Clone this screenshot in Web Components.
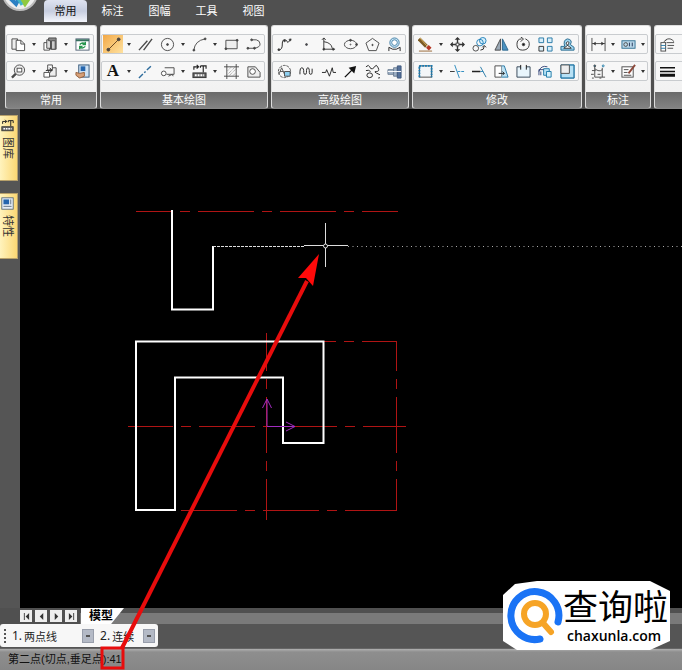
<!DOCTYPE html>
<html lang="zh-CN">
<head>
<meta charset="utf-8">
<title>CAD</title>
<style>
html, body { margin: 0; height: 100%; background: #000; }
body { font-family: "Liberation Sans", "Noto Sans CJK SC", sans-serif; font-size: 11px; overflow: hidden; }
</style>
</head>
<body>
<cad-app></cad-app>
<script>
const ICONS = {
  copy: '<path d="M1 2h6v11H1z" fill="#eee"/><path d="M5.500 3.500h5l4 4v7h-9z" fill="#fff"/><path d="M10.500 3.500v4h4"/>',
  paste: '<path d="M1 6h6v8H1z" fill="#fff"/><path d="M4 3h5v9H4z" fill="#ddd"/><path d="M6 1h8v12H8V4H6z" fill="#888"/><path d="M9 4h4v9H9z" fill="#ccc"/>',
  refresh: '<rect x="1" y="2" width="14" height="12" fill="#fff" stroke="#567"/><path d="M1 3.500h14" stroke="#387060" stroke-width="2"/><path d="M5 8q3-3 6-.5M11 5v3H8M11 10q-3 3-6 .5M5 13v-3h3" stroke="#27964d" stroke-width="1.500"/>',
  zoom: '<circle cx="9" cy="6.500" r="5.500" fill="#eee"/><rect x="6.500" y="4.500" width="5" height="4" fill="#fff"/><path d="M5 10.500l-4 4" stroke-width="2.500"/>',
  views: '<path d="M6 4h8v9H6z" fill="#eee"/><path d="M5 1h5v6H5z" fill="#fff"/><path d="M1 9h6v5H1z" fill="#fff"/><path d="M3 7l6-1-2-2M9 6l-1 3" stroke="#222"/>',
  props: '<rect x="4" y="1" width="11" height="13" fill="#cfe3f5" stroke="#357"/><rect x="6" y="2.500" width="5" height="5" fill="#2465ad" stroke="none"/><path d="M1 9l4 1 5-1v4l-5 2-4-3z" fill="#d7a078" stroke="#96603b"/>',
  panel: '<rect x="1" y="1" width="14" height="14" fill="#e6eef6" stroke="#4a5d70"/><rect x="3" y="3" width="7" height="6" fill="#2465ad" stroke="none"/><path d="M12 3v6M3 11.500h10" stroke="#4a5d70"/>',
  line: '<path d="M2 14L14 2" stroke="#654321"/><circle cx="2.500" cy="13.500" r="1.500" fill="#543"/><circle cx="13.500" cy="2.500" r="1.500" fill="#543"/>',
  parallel: '<path d="M1 14L10 4M6 14L15 2" stroke-width="1.500"/>',
  circle: '<circle cx="8" cy="8" r="6.500"/><circle cx="8" cy="8" r="1" fill="#444"/>',
  arc: '<path d="M2 14Q3 4 14 2"/><circle cx="2" cy="14" r="1" fill="#444"/><circle cx="14" cy="2" r="1" fill="#444"/>',
  rect: '<path d="M2 3.500h12v9H2z" fill="#eee"/><circle cx="14" cy="3.500" r="1" fill="#444"/><circle cx="2" cy="12.500" r="1" fill="#444"/>',
  poly: '<path d="M6 3h5q4 1 4 4.500T9 12H2"/><circle cx="2" cy="12" r="1" fill="#444"/><circle cx="9" cy="12" r="1" fill="#444"/><circle cx="6" cy="3" r="1" fill="#444"/>',
  centerline: '<path d="M1 15L15 1" stroke="#2e6c9c" stroke-width="1.500" stroke-dasharray="6 2 2 2"/>',
  balloon: '<path d="M5 4h10v7H7M9 13l4-2 1 2"/><circle cx="4" cy="10" r="2.500" fill="#fff"/>',
  library: '<path d="M2 6V3h5M5 1l2 2-2 2M9 2h6v3M12 2v7M9 2v2" stroke="#222" stroke-width="1.200"/><rect x="1" y="9.500" width="14" height="5" fill="#666" stroke="#333"/><path d="M3 12h10" stroke="#fff" stroke-width="2" stroke-dasharray="2 1"/>',
  hatch: '<path d="M3 0v16M13 0v16M0 3h16M0 13h16"/><path d="M4 7l4-4M4 11l8-8M5 13l8-8M9 13l4-4" stroke="#888" stroke-dasharray="1 1"/>',
  region: '<path d="M2 3h8l5 6v5H2z" fill="#eee"/><circle cx="7" cy="8" r="3" fill="#fff"/>',
  spline: '<path d="M1 14C9 14 3 3 8 3S9 10 15 2" stroke="#222"/><circle cx="2" cy="13.500" r="1" fill="#222"/><circle cx="8" cy="4" r="1" fill="#222"/><circle cx="14" cy="3" r="1" fill="#222"/>',
  point: '<circle cx="8" cy="8" r="1" fill="#445"/>',
  axes: '<path d="M3 1v12h12M3 5q8 1 9 7M1 3l2-2 2 2" stroke="#333"/><circle cx="3" cy="13" r="1" fill="#222"/><circle cx="13" cy="13" r="1" fill="#222"/>',
  ellipse: '<ellipse cx="8" cy="8" rx="6.500" ry="4.500"/><circle cx="8" cy="3.500" r="1" fill="#444"/><circle cx="14.500" cy="8" r="1" fill="#444"/><circle cx="8" cy="8" r=".5"/>',
  pentagon: '<path d="M8 1.500l7 5-3 8H4l-3-8z"/><circle cx="8" cy="8.500" r=".7" fill="#444"/>',
  hole: '<circle cx="8" cy="6" r="5" fill="#c9e6f7" stroke="#4682a8"/><circle cx="8" cy="6" r="3" fill="#fff" stroke="#4682a8"/><path d="M2 15v-4l4 2h4l4-2v4" stroke="#222"/>',
  rotview: '<circle cx="8" cy="8" r="6.500" stroke-dasharray="3 1"/><path d="M8 8h6v5H8z" fill="#8fd0f0"/><path d="M2 11l3-7 3 7M3 8h4" stroke="#555"/>',
  wave: '<path d="M1 11V8q0-4 2-4t2 3v2q0 2 1.500 2T8 9V7q0-3 1.500-3T11 7v2q0 2 1.500 2T14 9V5" stroke="#222"/>',
  break: '<path d="M1 9h4l1-3 3 7 3-9 1 5h3" stroke="#222"/>',
  arrow: '<path d="M2 14L10 6" stroke="#111" stroke-width="1.500"/><path d="M14 2l-2 8-6-6z" fill="#111" stroke="none"/>',
  curves: '<path d="M1 3q3-3 4 0t3 2 3-3 3 2-2 4 3 3-1 4M1 7q3-1 5 1" stroke="#222"/><ellipse cx="5" cy="12" rx="3" ry="2.500" stroke="#222"/>',
  shaft: '<path d="M1 6h6v5H1zM7 4h4v9H7z" fill="#9fb1c5" stroke="#6d7f94"/><path d="M11 2h4v13h-4z" fill="#547099" stroke="#3f587c"/><path d="M1 8h14" stroke="#fff"/>',
  erase: '<path d="M1 2l8 8" stroke="#7c5b24" stroke-width="4"/><path d="M2 1l8 9" stroke="#e2ba67"/><path d="M10 10l3 3" stroke="#b63824" stroke-width="4"/><path d="M1 15h14" stroke="#996633"/>',
  move: '<path d="M8 1v14M1 8h14" stroke="#333" stroke-width="1.500"/><path d="M8 0l3 3H5zM8 16l3-3H5zM0 8l3-3v6zM16 8l-3-3v6z" fill="#333" stroke="none"/><rect x="6.500" y="6.500" width="3" height="3" fill="#fff"/>',
  copyobj: '<circle cx="11.500" cy="4" r="3.500" stroke="#2382bb" fill="#d6effb"/><circle cx="8.500" cy="6" r="3.500" stroke="#2382bb"/><circle cx="4" cy="12" r="3"/><path d="M9 14q4 0 4-4M11 11l2-2 2 2" stroke="#222"/>',
  mirror: '<path d="M7 2v12H1z" fill="#9aa8b5"/><path d="M9 2v12h6z" fill="#4c92c1" stroke="#2b668d"/>',
  rotate: '<path d="M10 2q5 2 4 7t-7 5-6-6 5-6M5 0l3 2-3 3" stroke="#333"/><circle cx="8" cy="8" r="1.300" fill="#111"/>',
  array: '<g fill="#d9effa" stroke="#287aa8"><path d="M1 1h5v5H1zM10 1h5v5h-5zM10 10h5v5h-5z"/><path d="M1 10h5v5H1z" stroke="#333"/></g>',
  offset: '<path d="M1 14v-4h4q-2-7 3-8 6 1 3 6l4 3v3z" fill="#9cd3ee" stroke="#24698d"/><path d="M4 12h8q-2-2-4-3 3-4 0-4-3 1 0 4z" fill="#fff" stroke="#333"/>',
  stretch: '<rect x="1.500" y="2" width="13" height="12" fill="#f3f6f8"/><path d="M1.500 14V2h13v12" stroke="#167cb5" stroke-width="2" stroke-dasharray="2 1"/>',
  trim: '<path d="M5 1l5 14" stroke="#2889be"/><path d="M0 8h5" stroke="#333"/><path d="M8 8h8" stroke="#2889be" stroke-dasharray="3 1"/>',
  extend: '<path d="M0 8h9" stroke="#222" stroke-width="1.500"/><path d="M9 8h3" stroke="#2889be"/><path d="M9 3l6 11" stroke="#287aa8"/>',
  scale: '<path d="M1 2h7v12H1z" fill="#fff"/><path d="M8 2h3l4 12H8" fill="#bfe2f3" stroke="#287aa8"/><path d="M5 10h6M9 8l2 2-2 2" stroke="#222"/>',
  gap: '<path d="M5 3H1v11h14V3h-4" fill="#e8f5fc" stroke="#345"/><path d="M5 1v5M11 1v5" stroke="#111"/>',
  block: '<path d="M6 5h6v7H6z" fill="#bce5f6" stroke="#1d78a7"/><path d="M9 8h5v6H9z" fill="#d8f3fc" stroke="#1d78a7"/><path d="M1 8q2-7 9-5M1 12V6h5M3 12V8" stroke="#347"/>',
  corner: '<path d="M1 1h14v14H1z" fill="#b7e1f5" stroke="#287aa8"/><path d="M1 1h9v9H1z" fill="#eee"/><path d="M10 1h5v14H1v-4" stroke="#287aa8"/>',
  dim: '<path d="M1 1v14M15 1v14M1 7h14"/><path d="M2 7l3-2v4zM14 7l-3-2v4z" fill="#333" stroke="none"/>',
  tol: '<rect x="1" y="4" width="14" height="8" fill="#b9d7e9" stroke="#347294"/><circle cx="5" cy="8" r="2"/><path d="M9 6v4M12 6v4" stroke="#235"/>',
  coords: '<path d="M4 2v12h11M4 5q5 4 8 1M1 7h4M12 4v10"/><circle cx="4" cy="2" r="1" fill="#1e7ba8"/><circle cx="13" cy="2" r="1" stroke="#1e7ba8"/><path d="M0 11h3M7 11h3M1 15h2M9 15h2"/>',
  editdim: '<rect x="1" y="3" width="12" height="11" fill="#fff"/><path d="M3 6h5M3 9h4M3 12h8"/><path d="M8 10L15 1" stroke="#8c493b" stroke-width="2"/>',
  layer: '<path d="M6 3q5-3 9 2M7 6h8M8 9h7M8 12h6M4 5l3-2"/><rect x="1" y="6" width="5" height="9" fill="#fff"/><path d="M1 9h5M1 12h5" stroke="#287aa8"/>',
  width: '<path d="M0 4h16M0 8h16" stroke="#111" stroke-width="1.500"/><path d="M0 12h16" stroke="#111" stroke-width="3"/>'
};
const svg = n => `<svg viewBox="0 0 16 16" fill="none" stroke="#4b4b4b" aria-hidden="true">${ICONS[n]}</svg>`;
function define(name, html) {
  customElements.define(name, class extends HTMLElement {
    connectedCallback() {
      if (this.shadowRoot) return;
      this.attachShadow({ mode: 'open' }).innerHTML = typeof html === 'function' ? html(this) : html;
    }
  });
}

define('tool-row', el => `<style>
  :host { display: flex; height: 18px; border: 1px solid #c9cccf; border-radius: 2px; background: #f7f7f7; margin: 0 -1px; }
  button { all: unset; display: flex; align-items: center; justify-content: center; width: 22px; }
  button.on { background: linear-gradient(135deg, #f2a846, #ffe2a0); width: 20px; margin: 0 1px; }
  button.drop { width: var(--drop, 10px); }
  .drop::before { content: ""; border: 2px solid transparent; border-top: 3px solid #333; border-bottom: 0; }
  svg { width: 15px; height: 15px; }
  b { font: bold 17px/18px "Liberation Serif", serif; color: #111; }
</style>${el.getAttribute('tools').split(' ').map(t =>
  t === 'v' ? '<button class="drop" aria-label="menu"></button>' :
  t === 'text' ? '<button aria-label="text"><b>A</b></button>' :
  `<button aria-label="${t}" class="${t === 'line' ? 'on' : ''}">${svg(t)}</button>`).join('')}`);

define('ribbon-group', `<style>
  :host { display: flex; flex-direction: column; flex: none; box-sizing: border-box; height: 84px; border: 1px solid #ddd; border-bottom-color: #888; border-radius: 3px; background: linear-gradient(#fbfbfb, #efefef); overflow: hidden; }
  .body { flex: 1; display: flex; flex-direction: column; gap: 7px; padding: 8px 3px 0 1px; }
  h2 { margin: 0; font-size: 11px; font-weight: 400; line-height: 16px; min-height: 16px; text-align: center; color: #fff; background: linear-gradient(#6a6a6a, #838383); }
</style><div class="body"><slot></slot></div><h2><slot name="title"></slot></h2>`);

define('ribbon-tab', `<style>
  :host { display: block; }
  button { all: unset; box-sizing: border-box; width: 43px; height: 22px; line-height: 22px; text-align: center; color: #fff; border-radius: 4px 4px 0 0; }
  :host([active]) button { background: linear-gradient(#dfe3f0, #c6cddf 50%, #f3f5fb); color: #111; }
</style><button role="tab"><slot></slot></button>`);

define('ribbon-bar', `<style>
  :host { display: block; background: #505050; height: 109px; overflow: hidden; }
  nav { display: flex; gap: 4px; padding-left: 44px; height: 25px; position: relative; }
  .logo { position: absolute; left: 2px; top: -25px; width: 36px; height: 36px; }
  .groups { display: flex; gap: 3px; padding-left: 5px; }
  .narrow { --drop: 8px; }
</style>
<nav role="tablist">
  <svg class="logo" viewBox="0 0 36 36"><circle cx="18" cy="18" r="17" fill="#eee" stroke="#bbb" stroke-width="2"/><path d="M7 22l7 7 5-9" fill="none" stroke="#2b80c3" stroke-width="4"/><path d="M17 20l6 9 6-9" fill="none" stroke="#8fc93f" stroke-width="4"/><path d="M15 22l5 8" stroke="#43b6c5" stroke-width="3"/></svg>
  <ribbon-tab active>常用</ribbon-tab><ribbon-tab>标注</ribbon-tab><ribbon-tab>图幅</ribbon-tab><ribbon-tab>工具</ribbon-tab><ribbon-tab>视图</ribbon-tab>
</nav>
<div class="groups">
  <ribbon-group><tool-row tools="copy v paste v refresh"></tool-row><tool-row tools="zoom v views v props"></tool-row><span slot="title">常用</span></ribbon-group>
  <ribbon-group><tool-row tools="line v parallel circle v arc v rect poly"></tool-row><tool-row tools="text v centerline balloon v library v hatch region"></tool-row><span slot="title">基本绘图</span></ribbon-group>
  <ribbon-group><tool-row tools="spline point axes ellipse pentagon hole"></tool-row><tool-row tools="rotview wave break arrow curves shaft"></tool-row><span slot="title">高级绘图</span></ribbon-group>
  <ribbon-group><tool-row tools="erase v move copyobj mirror rotate array offset"></tool-row><tool-row tools="stretch v trim extend scale gap block corner"></tool-row><span slot="title">修改</span></ribbon-group>
  <ribbon-group class="narrow"><tool-row tools="dim v tol v"></tool-row><tool-row tools="coords v editdim v"></tool-row><span slot="title">标注</span></ribbon-group>
  <ribbon-group><tool-row tools="layer rect"></tool-row><tool-row tools="width centerline"></tool-row></ribbon-group>
</div>`);

define('side-tab', el => `<style>
  :host { display: block; }
  button { all: unset; box-sizing: border-box; display: flex; flex-direction: column; align-items: center; gap: 5px; width: 18px; height: 66px; padding: 3px 2px 0 0; border: 1px solid #b7a06a; border-left: 0; background: linear-gradient(90deg, #fff3bd, #fbd774); color: #333; }
  svg { width: 13px; height: 13px; flex: none; }
  span { writing-mode: vertical-rl; text-orientation: sideways; line-height: 14px; }
</style><button>${svg(el.getAttribute('icon'))}<span><slot></slot></span></button>`);

define('cad-drawing', `<style>
  :host { display: block; flex: 1; min-width: 0; background: #000; overflow: hidden; }
  svg { display: block; width: 100%; height: 100%; }
</style>
<svg fill="none"><g transform="translate(-20 -109)">
  <g stroke="#b01414" stroke-dasharray="56 8 10 8">
    <path d="M136 211.500H398" stroke-dashoffset="20"/>
    <path d="M128 426.500H406" stroke-dashoffset="11"/>
    <path d="M324 341.500H397" stroke-dashoffset="44"/>
    <path d="M396.500 341V511" stroke-dashoffset="26"/>
    <path d="M180 510.500H397" stroke-dashoffset="-1"/>
    <path d="M266.500 333V520" stroke-dashoffset="18"/>
  </g>
  <g stroke="#fff" stroke-width="2">
    <path d="M172 210V309.500H213V246"/>
    <path d="M136 341.500H323.500V443H283V377.500H175V510H136Z"/>
  </g>
  <path d="M213 246.500H304" stroke="#ddd" stroke-dasharray="3 1"/>
  <path d="M348 246.500H4000" stroke="#aaa" stroke-dasharray="1 3.500"/>
  <path d="M304 245.500H348M325.500 223V267" stroke="#ddd"/><circle cx="325.500" cy="246" r="2" stroke="#ddd" fill="#000"/>
  <path d="M267 426.500V399M262.500 408l4.500-9 4.500 9M267 426.500H295M286 422l9 4.500-9 4.500" stroke="#a22cc0"/>
</g></svg>`);

define('model-tabs', `<style>
  :host { display: block; background: linear-gradient(#505050 5px, #7a7a7a 5px); }
  div { display: flex; align-items: center; height: 16px; padding-left: 20px; gap: 3px; background: linear-gradient(90deg, #505050 80px, transparent 80px); }
  button { all: unset; width: 12px; height: 12px; background: #eee; display: flex; justify-content: center; align-items: center; }
  button svg { width: 7px; height: 7px; fill: #333; }
  button.tab { width: 35px; height: 16px; padding-left: 8px; background: #fff; clip-path: polygon(0 0, 100% 0, 70% 100%, 0 100%); font-size: 12px; font-weight: 700; line-height: 16px; justify-content: flex-start; color: #000; margin-left: 1px; }
</style><div>
<button aria-label="first"><svg viewBox="0 0 8 8"><path d="M1 0h1v8H1zM7 0v8L3 4z"/></svg></button>
<button aria-label="previous"><svg viewBox="0 0 8 8"><path d="M6 0v8L2 4z"/></svg></button>
<button aria-label="next"><svg viewBox="0 0 8 8"><path d="M2 0v8l4-4z"/></svg></button>
<button aria-label="last"><svg viewBox="0 0 8 8"><path d="M6 0h1v8H6zM1 0v8l4-4z"/></svg></button>
<button class="tab">模型</button></div>`);

define('option-bar', `<style>
  :host { display: block; background: #555; }
  form { display: inline-flex; align-items: center; height: 23px; box-sizing: border-box; width: 158px; margin-bottom: 1px; vertical-align: top; background: #f7f7f7; border-radius: 3px; padding-left: 4px; }
  i { height: 14px; border-left: 2px dotted #555; margin-right: 6px; }
  label { display: flex; align-items: center; color: #222; font: 12px "Noto Sans", sans-serif; }
  .pick { display: flex; align-items: center; margin-left: 2px; }
  select { appearance: none; border: 0; background: transparent; font: 11px/16px "Noto Sans CJK SC", sans-serif; color: #222; height: 18px; width: 70px; padding: 0; }
  .pick::after { content: ""; pointer-events: none; width: 12px; height: 14px; margin-left: -12px; background: linear-gradient(#555, #555) center / 4px 2px no-repeat, #b4bac6; outline: 1px solid #989eab; outline-offset: -1px; }
  label + label { margin-left: 6px; }
  label + label select { width: 43px; }
</style><form><i></i>
<label>1.<span class="pick"><select><option>两点线</option></select></span></label>
<label>2.<span class="pick"><select><option>连续</option></select></span></label></form>`);

define('status-bar', `<style>
  :host { display: block; background: linear-gradient(#b0b0b0, #8e8e8e 3px, #868686); height: 21px; line-height: 20px; padding-left: 8px; color: #111; white-space: nowrap; border-top: 1px solid #666; }
</style><slot></slot>`);

define('call-out', `<style>
  :host { position: absolute; left: 0; top: 0; pointer-events: none; }
  svg { display: block; overflow: visible; width: 1px; height: 1px; }
</style><svg><path d="M122 648L307 281" stroke="#e80c0c" stroke-width="4"/><path d="M319 254L298 278 306 278 313 286Z" fill="#ff0a0a"/><rect x="102" y="648" width="21" height="20" fill="none" stroke="#e80c0c" stroke-width="3"/></svg>`);

define('site-mark', `<style>
  :host { position: absolute; right: 12px; bottom: 20px; display: flex; align-items: center; width: 167px; height: 69px; background: #fff; clip-path: polygon(0 14px, 12px 3px, 34px 0, 147px 0, 167px 10px, 167px 60px, 147px 69px, 14px 69px, 0 60px); white-space: nowrap; }
  svg { width: 56px; height: 58px; flex: none; margin-left: 4px; }
  p { margin: 0; font-size: 35px; line-height: 40px; color: #000; }
  a { display: block; margin-left: 4px; font: 600 14px/16px "Open Sans", sans-serif; color: #000; text-decoration: none; }
</style>
<svg viewBox="0 0 56 58" fill="none" stroke-linecap="round"><path d="M51 35A24 24 0 1 0 33 52" stroke="#1a73f5" stroke-width="7"/><circle cx="28" cy="27" r="11" stroke="#f6a426" stroke-width="6"/><path d="M36 36l8 9" stroke="#f6a426" stroke-width="6"/></svg>
<div><p>查询啦</p><a href="#">chaxunla.com</a></div>`);

define('cad-app', `<style>
  :host { display: flex; flex-direction: column; height: 100vh; position: relative; overflow: hidden; }
  main { flex: 1; min-height: 0; display: flex; }
  aside { width: 20px; flex: none; background: #555; padding-top: 6px; display: flex; flex-direction: column; gap: 12px; }
</style>
<ribbon-bar></ribbon-bar>
<main><aside><side-tab icon="library">图库</side-tab><side-tab icon="panel">特性</side-tab></aside><cad-drawing></cad-drawing></main>
<model-tabs></model-tabs><option-bar></option-bar><status-bar>第二点(切点,垂足点):41</status-bar>
<call-out></call-out><site-mark></site-mark>`);
</script>
</body>
</html>
